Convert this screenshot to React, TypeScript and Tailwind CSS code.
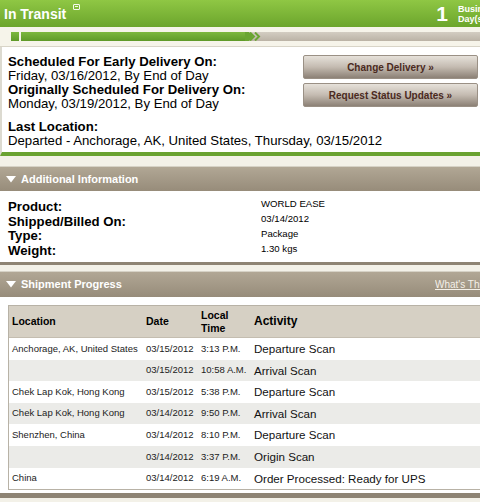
import React from "react";

const rows = [
  { loc: "Anchorage, AK, United States", date: "03/15/2012", time: "3:13 P.M.", act: "Departure Scan" },
  { loc: "", date: "03/15/2012", time: "10:58 A.M.", act: "Arrival Scan" },
  { loc: "Chek Lap Kok, Hong Kong", date: "03/15/2012", time: "5:38 P.M.", act: "Departure Scan" },
  { loc: "Chek Lap Kok, Hong Kong", date: "03/14/2012", time: "9:50 P.M.", act: "Arrival Scan" },
  { loc: "Shenzhen, China", date: "03/14/2012", time: "8:10 P.M.", act: "Departure Scan" },
  { loc: "", date: "03/14/2012", time: "3:37 P.M.", act: "Origin Scan" },
  { loc: "China", date: "03/14/2012", time: "6:19 A.M.", act: "Order Processed: Ready for UPS" },
];

function Tri() {
  return (
    <svg width="10" height="7" viewBox="0 0 10 7" className="mr-[5px]">
      <polygon points="0,0 10,0 5,6.5" fill="#ffffff" />
    </svg>
  );
}

export default function App() {
  return (
    <div className="w-[480px] h-[502px] overflow-hidden bg-[#f3f1e8] text-black font-['Liberation_Sans',Arial,sans-serif]">
      {/* Header */}
      <div className="h-[27px] bg-gradient-to-b from-[#8fc744] to-[#6ca52c] flex items-center justify-between pl-[4px]">
        <div className="flex items-start">
          <span className="text-[14px] font-bold text-white leading-none">In Transit</span>
          <span className="ml-[7px] mt-[-3px] w-[7px] h-[6px] border border-white/90 rounded-[1px] flex items-center justify-center">
            <span className="block w-[3px] h-[1px] bg-white/90" />
          </span>
        </div>
        <div className="flex items-center">
          <span className="text-[21px] font-bold text-white leading-none mr-[10px]">1</span>
          <div className="flex flex-col text-[9px] font-bold text-white leading-[10px] w-[22px] overflow-hidden whitespace-nowrap">
            <span>Business</span>
            <span>Day(s)</span>
          </div>
        </div>
      </div>

      {/* Progress strip */}
      <div className="h-[20px] bg-[#f6f4ea] flex items-center pl-[11px] border-b border-[#d9d5c8]">
        <div className="w-[8px] h-[9px] bg-gradient-to-b from-[#7db83e] to-[#5f9a28]" />
        <div className="ml-[2px] w-[224px] h-[9px] bg-gradient-to-b from-[#7db83e] to-[#5f9a28]" />
        <div className="flex-1 h-[9px] bg-gradient-to-b from-[#d3cdc2] to-[#bbb3a6] relative">
          <svg width="18" height="9" viewBox="0 0 18 9" className="absolute left-0 top-0">
            <polygon points="0,0 4,0 8,4.5 4,9 0,9" fill="#6aa531" />
            <polyline points="5,0.5 9,4.5 5,8.5" fill="none" stroke="#6aa531" strokeWidth="2" />
            <polyline points="10,0.5 14,4.5 10,8.5" fill="none" stroke="#6aa531" strokeWidth="2" />
          </svg>
        </div>
      </div>

      {/* Delivery card */}
      <div className="bg-white border-l-[2px] border-[#dcdad0] border-b-[4px] border-b-[#6aa231] flex pt-[8px] pb-[4px] pl-[6px]">
        <div className="flex-1 text-[13.2px] leading-[14px]">
          <div className="font-bold">Scheduled For Early Delivery On:</div>
          <div>Friday, 03/16/2012, By End of Day</div>
          <div className="font-bold">Originally Scheduled For Delivery On:</div>
          <div>Monday, 03/19/2012, By End of Day</div>
          <div className="font-bold mt-[9px]">Last Location:</div>
          <div>Departed - Anchorage, AK, United States, Thursday, 03/15/2012</div>
        </div>
      </div>
      <div className="relative">
        <div className="absolute right-[2px] top-[-101px] w-[175px] flex flex-col gap-[4px]">
          <div className="h-[24px] rounded-[2px] border border-[#9a9085] bg-gradient-to-b from-[#e6e1da] via-[#c4bbb1] to-[#8c8176] flex items-center justify-center text-[10px] font-bold text-[#4b2a1e]">
            Change Delivery »
          </div>
          <div className="h-[24px] rounded-[2px] border border-[#9a9085] bg-gradient-to-b from-[#e6e1da] via-[#c4bbb1] to-[#8c8176] flex items-center justify-center text-[10px] font-bold text-[#4b2a1e]">
            Request Status Updates »
          </div>
        </div>
      </div>

      {/* Additional information */}
      <div className="mt-[10px] border-t border-[#d6d2c6]">
        <div className="h-[24px] bg-gradient-to-b from-[#b1a795] to-[#978c7a] flex items-center pl-[6px] text-[11px] font-bold text-white">
          <Tri />
          Additional Information
        </div>
        <div className="bg-white border-b-[3px] border-[#8e8474] flex pt-[9px] pb-[6px] pl-[8px] h-[74px]">
          <div className="w-[253px] text-[13.2px] leading-[14.5px] font-bold">
            <div>Product:</div>
            <div>Shipped/Billed On:</div>
            <div>Type:</div>
            <div>Weight:</div>
          </div>
          <div className="text-[9.6px] leading-[15px] mt-[-4px]">
            <div>WORLD EASE</div>
            <div>03/14/2012</div>
            <div>Package</div>
            <div>1.30 kgs</div>
          </div>
        </div>
      </div>

      {/* Shipment progress */}
      <div className="mt-[6px] border-t border-[#d6d2c6]">
        <div className="h-[25px] bg-gradient-to-b from-[#b1a795] to-[#978c7a] flex items-center justify-between pl-[6px] text-[11px] font-bold text-white">
          <div className="flex items-center">
            <Tri />
            Shipment Progress
          </div>
          <span className="text-[10px] font-normal underline text-[#f4f0e8] w-[45px] overflow-hidden whitespace-nowrap">What's This?</span>
        </div>
        <div className="bg-white pt-[8px] pl-[8px] pb-[3px] border-b-[5px] border-[#8e8474]">
          <div className="border border-[#b8b2a6] border-r-0">
            <div className="h-[32px] bg-[#d6d0c4] flex items-center text-[10.5px] font-bold leading-[13px] border-b border-[#c4bdb0]">
              <div className="w-[137px] pl-[3px]">Location</div>
              <div className="w-[55px]">Date</div>
              <div className="w-[53px]">Local<br />Time</div>
              <div className="text-[12px]">Activity</div>
            </div>
            {rows.map((r, i) => (
              <div
                key={i}
                className={`h-[21.6px] flex items-center text-[9.5px] ${i % 2 === 1 ? "bg-[#ebebe8]" : "bg-white"}`}
              >
                <div className="w-[137px] pl-[3px] text-[#222] whitespace-nowrap">{r.loc}</div>
                <div className="w-[55px] text-[#222]">{r.date}</div>
                <div className="w-[53px] text-[#222] whitespace-nowrap overflow-hidden">{r.time}</div>
                <div className="text-[11.6px] text-[#111] whitespace-nowrap">{r.act}</div>
              </div>
            ))}
          </div>
        </div>
      </div>
    </div>
  );
}
